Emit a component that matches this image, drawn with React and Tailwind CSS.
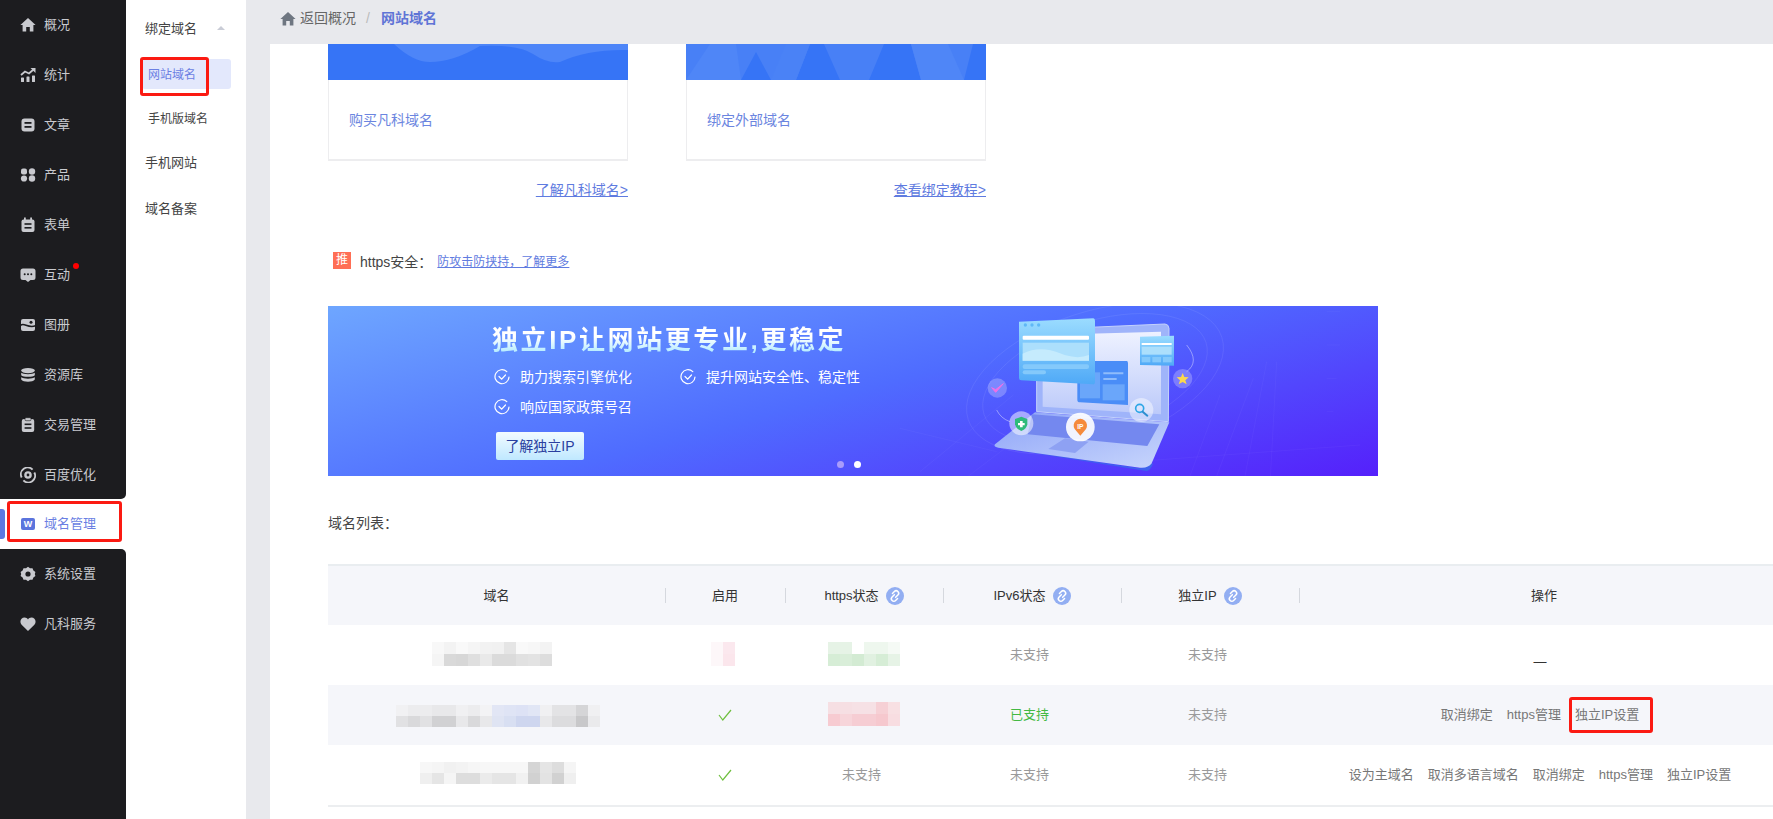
import React from 'react';

const ic = '#c8c9ce';
const I = ({ children, size = 16 }) => (
  <svg width={size} height={size} viewBox="0 0 16 16" className="shrink-0">{children}</svg>
);
const icons = {
  home: <I><path d="M8 1 15.6 8H13.4V14.6H9.8V10H6.2V14.6H2.6V8H.4Z" fill={ic} /></I>,
  stats: <I><rect x="1" y="10.5" width="3" height="4.5" rx=".6" fill={ic} /><rect x="6.5" y="9.5" width="3" height="5.5" rx=".6" fill={ic} /><rect x="12" y="8.5" width="3" height="6.5" rx=".6" fill={ic} /><path d="M1 8 5 4.5 9 6.5 13.5 2.5" fill="none" stroke={ic} strokeWidth="1.8" /><path d="M10.5 1H15.5V6Z" fill={ic} /></I>,
  doc: <I><rect x="1.5" y="1.5" width="13" height="13" rx="3" fill={ic} /><rect x="4.5" y="5" width="7" height="1.8" fill="#1c1c1f" /><rect x="4.5" y="9" width="7" height="1.8" fill="#1c1c1f" /></I>,
  grid: <I><rect x="1" y="1.5" width="6" height="6" rx="2" fill={ic} /><circle cx="12" cy="4.5" r="3.2" fill={ic} /><circle cx="4" cy="11.5" r="3.1" fill={ic} /><circle cx="12" cy="11.5" r="3.2" fill={ic} /></I>,
  form: <I><rect x="1.5" y="2.5" width="13" height="12.5" rx="2" fill={ic} /><rect x="4" y=".5" width="1.8" height="3.5" fill={ic} /><rect x="10.2" y=".5" width="1.8" height="3.5" fill={ic} /><rect x="4.5" y="6.2" width="7" height="1.6" fill="#1c1c1f" /><rect x="4.5" y="10" width="7" height="1.6" fill="#1c1c1f" /></I>,
  chat: <I><path d="M3 1.5H13A2.5 2.5 0 0 1 15.5 4V10.5A2.5 2.5 0 0 1 13 13H10.5L8 15 5.5 13H3A2.5 2.5 0 0 1 .5 10.5V4A2.5 2.5 0 0 1 3 1.5Z" fill={ic} /><circle cx="4.7" cy="7.2" r="1" fill="#1c1c1f" /><circle cx="8" cy="7.2" r="1" fill="#1c1c1f" /><circle cx="11.3" cy="7.2" r="1" fill="#1c1c1f" /></I>,
  album: <I><rect x="1" y="2" width="14" height="12" rx="2" fill={ic} /><path d="M.5 8.5C4 5 7.5 11.5 15.5 8.8" fill="none" stroke="#1c1c1f" strokeWidth="1.5" /><circle cx="11" cy="5.2" r="1.5" fill="#1c1c1f" /></I>,
  db: <I><ellipse cx="8" cy="3.6" rx="6.8" ry="2.6" fill={ic} /><path d="M1.2 5.7C3 7.6 13 7.6 14.8 5.7V8.2C13 10.2 3 10.2 1.2 8.2Z" fill={ic} /><path d="M1.2 10.3C3 12.2 13 12.2 14.8 10.3V12.4C13 15.4 3 15.4 1.2 12.4Z" fill={ic} /></I>,
  clip: <I><rect x="1.8" y="2" width="12.4" height="13" rx="2" fill={ic} /><rect x="5" y=".7" width="6" height="3" rx="1" fill={ic} stroke="#1c1c1f" strokeWidth=".6" /><rect x="4.6" y="6.5" width="6.8" height="1.6" fill="#1c1c1f" /><rect x="4.6" y="10.2" width="6.8" height="1.6" fill="#1c1c1f" /></I>,
  ring: <I><path d="M1.7 10.5A6.8 6.8 0 0 1 12.6 2.6" fill="none" stroke={ic} strokeWidth="1.9" /><path d="M14.3 5.5A6.8 6.8 0 0 1 3.4 13.4" fill="none" stroke={ic} strokeWidth="1.9" /><circle cx="8" cy="8" r="2.6" fill="none" stroke={ic} strokeWidth="2.4" /></I>,
  gear: <I><path d="M8 .8 10 2.2 12.5 2.2 13.4 4.5 15.4 6 14.8 8 15.4 10 13.4 11.5 12.5 13.8 10 13.8 8 15.2 6 13.8 3.5 13.8 2.6 11.5.6 10 1.2 8 .6 6 2.6 4.5 3.5 2.2 6 2.2Z" fill={ic} /><circle cx="8" cy="8" r="2.6" fill="#1c1c1f" /></I>,
  heart: <I><path d="M8 15 1.6 8.8C-1 5.8 1 1.6 4.6 1.6 6 1.6 7.2 2.3 8 3.4 8.8 2.3 10 1.6 11.4 1.6 15 1.6 17 5.8 14.4 8.8Z" fill={ic} /></I>,
};

const NavRow = ({ icon, label, dot }) => (
  <div className="h-[50px] flex items-center pl-[20px] gap-[8px] text-[13px] text-[#c9cacf]">
    {icons[icon]}
    <span className="relative whitespace-nowrap">
      {label}
      {dot && <span className="absolute -top-[2px] -right-[9px] w-[6px] h-[6px] rounded-full bg-[#ff0000]" />}
    </span>
  </div>
);

const Sidebar = () => (
  <div className="w-[126px] shrink-0 h-full flex flex-col">
    <div className="h-[499px] bg-[#1c1c1f] rounded-br-[5px]">
      <NavRow icon="home" label="概况" />
      <NavRow icon="stats" label="统计" />
      <NavRow icon="doc" label="文章" />
      <NavRow icon="grid" label="产品" />
      <NavRow icon="form" label="表单" />
      <NavRow icon="chat" label="互动" dot />
      <NavRow icon="album" label="图册" />
      <NavRow icon="db" label="资源库" />
      <NavRow icon="clip" label="交易管理" />
      <NavRow icon="ring" label="百度优化" />
    </div>
    <div className="h-[50px] relative flex items-center pl-[21px] gap-[9px] text-[13px] text-[#6b7fe3] bg-white">
      <span className="absolute left-0 top-[10px] w-[5px] h-[30px] bg-[#5e78e0] rounded-r-[3px]" />
      <span className="absolute left-[7px] top-[2px] w-[115px] h-[41px] border-[3px] border-[#fb1a12] rounded-[3px]" />
      <span className="w-[14px] h-[12px] bg-[#5b74dd] rounded-[2px] text-white text-[9px] font-bold flex items-center justify-center leading-none">W</span>
      <span className="whitespace-nowrap">域名管理</span>
    </div>
    <div className="flex-1 bg-[#1c1c1f] rounded-tr-[5px]">
      <NavRow icon="gear" label="系统设置" />
      <NavRow icon="heart" label="凡科服务" />
    </div>
  </div>
);

const SubNav = () => (
  <div className="w-[120px] shrink-0 h-full bg-white text-[13px] text-[#444]">
    <div className="h-[59px] pl-[19px] flex items-start pt-[19px] leading-[20px]">
      <span>绑定域名</span>
      <span className="ml-[20px] mt-[7px] w-0 h-0 border-x-[4px] border-x-transparent border-b-[4px] border-b-[#c9ccd6]" />
    </div>
    <div className="relative ml-[16px] w-[89px] h-[30px] bg-[#e3e8fc] rounded-[3px] flex items-center pl-[6px] pt-[2px] text-[12px] text-[#6b7fe3]">
      网站域名
      <span className="absolute -left-[2px] -top-[2px] w-[69px] h-[39px] border-[3px] border-[#fb1a12] rounded-[3px]" />
    </div>
    <div className="mt-[20px] h-[20px] pl-[22px] flex items-center text-[12px]">手机版域名</div>
    <div className="mt-[24px] h-[20px] pl-[19px] flex items-center">手机网站</div>
    <div className="mt-[26px] h-[20px] pl-[19px] flex items-center">域名备案</div>
  </div>
);

const Card = ({ art, label }) => (
  <div className="w-[300px] h-[117px] border border-t-0 border-[#ededef] border-b-2">
    <div className="h-[36px] -mx-px overflow-hidden">{art}</div>
    <div className="h-[80px] pl-[20px] flex items-center text-[14px] text-[#6b85e0]">{label}</div>
  </div>
);

const WaveArt = () => (
  <svg width="300" height="36" viewBox="0 0 300 36" className="block">
    <rect width="300" height="36" fill="#3674f6" />
    <path d="M66 0Q85 18 102 18 125 18 152 2 190 0 205 10 220 20 232 18 260 5 300 6V0Z" fill="#4d85f8" />
  </svg>
);
const PeakArt = () => (
  <svg width="300" height="36" viewBox="0 0 300 36" className="block">
    <rect width="300" height="36" fill="#4880f6" />
    <path d="M0 36 24 0H50L55 36Z" fill="#4f86f7" />
    <path d="M55 36 70 8 85 36ZM110 36 124 0H138L154 36ZM183 36 198 0H225L235 36ZM278 36 287 0H300V36Z" fill="#3674f6" />
    <path d="M85 36 100 0H124L110 36Z" fill="#4a82f6" />
    <path d="M235 36 225 0H262L278 36Z" fill="#4f86f7" />
  </svg>
);

const CheckRound = () => (
  <svg width="16" height="16" viewBox="0 0 16 16" className="shrink-0" fill="none" stroke="#fff" strokeWidth="1.2" strokeLinecap="round">
    <path d="M12.8 2.6A7 7 0 1 0 15 8" />
    <path d="M5 7.5 7.7 10.2 11.5 6" />
  </svg>
);

const Illustration = () => (
  <svg width="500" height="190" viewBox="0 0 1500 570" className="absolute left-[572px] -top-[11px]">
    <defs>
      <linearGradient id="win" x1="0" y1="0" x2="0" y2="1"><stop offset="0" stopColor="#9bdcff" /><stop offset="1" stopColor="#4fa9f7" /></linearGradient>
      <linearGradient id="base" x1="0" y1="0" x2="1" y2="1"><stop offset="0" stopColor="#8ea4f8" /><stop offset="1" stopColor="#c8d6fc" /></linearGradient>
      <linearGradient id="scr" x1="0" y1="0" x2="0" y2="1"><stop offset="0" stopColor="#eef2ff" /><stop offset="1" stopColor="#bccafa" /></linearGradient>
    </defs>
    <g fill="none" stroke="#fff" strokeOpacity=".1" strokeWidth="2">
      <ellipse cx="585" cy="250" rx="400" ry="200" transform="rotate(-18 585 250)" />
      <ellipse cx="585" cy="250" rx="350" ry="170" transform="rotate(-18 585 250)" />
      <path d="M60 530 340 300M170 570 420 380M860 570 960 300M940 570 1060 250M1030 570 1100 200M1110 570 1130 200M0 400 290 470M700 500 1380 450M1280 50H1320M1280 150H1320M1280 250H1310M1280 350H1300" strokeOpacity=".06" />
    </g>
    <path d="M290 345A70 70 0 0 0 330 380M860 150Q900 200 860 230" fill="none" stroke="#fff" strokeOpacity=".4" strokeWidth="3" />
    <path d="M282 455 740 528Q750 528 760 505L720 520Z" fill="#3d62ee" />
    <path d="M285 448 405 352 808 382 755 505Q745 520 720 518L295 458Q280 455 285 448Z" fill="url(#base)" />
    <path d="M396 358 778 388 742 453 383 418Z" fill="#7488ef" />
    <path d="M445 462 495 430 566 440 525 474Z" fill="#8ea1f3" />
    <path d="M410 104 795 87Q806 88 807 100L805 380 410 350Z" fill="#9fb4fa" stroke="#c4d2fc" strokeWidth="3" />
    <path d="M428 120 783 110 783 358 428 335Z" fill="url(#scr)" />
    <path d="M532 198 680 198Q684 198 684 205V330L540 322Q532 322 532 314Z" fill="#4a8df7" />
    <path d="M610 235H670M610 252H650" stroke="#8fbcfb" strokeWidth="6" />
    <rect x="608" y="268" width="66" height="48" fill="#6aa6fa" />
    <rect x="540" y="232" width="60" height="78" fill="#6aa6fa" />
    <path d="M357 80 580 70Q585 70 585 78V262Q585 269 578 268L364 256Q357 256 357 249Z" fill="url(#win)" />
    <circle cx="376" cy="90" r="5" fill="#5fb8f6" /><circle cx="396" cy="90" r="5" fill="#5fb8f6" /><circle cx="416" cy="90" r="5" fill="#5fb8f6" />
    <rect x="368" y="122" width="199" height="12" rx="3" fill="#fff" />
    <rect x="368" y="143" width="199" height="54" fill="#acdffc" />
    <path d="M368 176Q420 150 480 175 530 195 567 180V197H368Z" fill="#c5ebfd" />
    <rect x="368" y="208" width="199" height="14" rx="6" fill="#84c9fb" />
    <rect x="368" y="226" width="70" height="12" rx="6" fill="#84c9fb" />
    <path d="M720 125 822 122V212L720 210Z" fill="url(#win)" />
    <rect x="725" y="144" width="90" height="6" fill="#fff" />
    <rect x="725" y="155" width="90" height="24" fill="#acdffc" />
    <rect x="725" y="186" width="26" height="16" fill="#84c9fb" /><rect x="757" y="186" width="26" height="16" fill="#84c9fb" /><rect x="789" y="186" width="26" height="16" fill="#84c9fb" />
    <circle cx="292" cy="279" r="29" fill="#fff" fillOpacity=".25" />
    <path d="M275 278 287 292 310 266 287 284Z" fill="#f070e8" stroke="#f070e8" strokeWidth="3" strokeLinejoin="round" />
    <circle cx="364" cy="385" r="36" fill="#fff" fillOpacity=".5" />
    <path d="M345 372 364 365 382 372V388Q380 402 364 408 348 402 345 388Z" fill="#2fbb7c" />
    <path d="M360 378H368V384H374V391H368V397H360V391H354V384H360Z" fill="#fff" />
    <circle cx="541" cy="396" r="43" fill="#fff" fillOpacity=".9" />
    <path d="M541 422 524 402A20 20 0 1 1 558 402Z" fill="#f58a3c" />
    <text x="541" y="401" textAnchor="middle" fontSize="20" fontWeight="700" fill="#fff" fontFamily="Liberation Sans">IP</text>
    <circle cx="724" cy="345" r="36" fill="#fff" fillOpacity=".45" />
    <circle cx="719" cy="340" r="12" fill="none" stroke="#2ea6e6" strokeWidth="5" />
    <path d="M728 350 742 362" stroke="#2e8fd0" strokeWidth="6" strokeLinecap="round" />
    <circle cx="848" cy="251" r="29" fill="#fff" fillOpacity=".25" />
    <path d="M848 234 853 246 866 247 856 256 860 268 848 261 836 268 840 256 830 247 843 246Z" fill="#fbd84e" />
  </svg>
);

const LinkIcon = () => (
  <svg width="18" height="18" viewBox="0 0 18 18" className="shrink-0">
    <circle cx="9" cy="9" r="9" fill="#92aef2" />
    <g transform="rotate(-45 9 9)" fill="none" stroke="#fff" strokeWidth="1.5" strokeLinecap="round">
      <path d="M9.5 7.6H6.3a2.5 2.5 0 0 0 0 5H9" />
      <path d="M8.5 10.4H11.7a2.5 2.5 0 0 0 0-5H9" />
    </g>
  </svg>
);

const Head = ({ children, sep = true, className = '' }) => (
  <div className={`relative flex items-center justify-center gap-[7px] ${className}`}>
    {children}
    {sep && <span className="absolute -right-px top-[22px] w-px h-[15px] bg-[#d5d8de]" />}
  </div>
);

const Mosaic = ({ rows, w = 12, h = 12 }) => (
  <div className="flex flex-col">
    {rows.map((r, i) => (
      <div key={i} className="flex">
        {r.map((c, j) => (
          <span key={j} className="block" style={{ width: w, height: h, background: c }} />
        ))}
      </div>
    ))}
  </div>
);

const Check = () => (
  <svg width="14" height="12" viewBox="0 0 14 12" fill="none" stroke="#6fbf3f" strokeWidth="1.2"><path d="M1 6 4.8 11 13 1" /></svg>
);

const Off = () => <span className="text-[#9a9a9a] -ml-[5px]">未支持</span>;

const rowGrid = 'grid grid-cols-[337px_120px_158px_178px_178px_1fr] h-[60px] items-center text-[13px]';
const center = 'flex justify-center';

const App = () => (
  <div className="w-[1773px] h-[819px] overflow-hidden flex bg-white font-['Liberation_Sans','Noto_Sans_CJK_SC',sans-serif]">
    <Sidebar />
    <SubNav />
    <div className="flex-1 flex flex-col min-w-0 bg-[#e8e9ed]">
      <div className="h-[44px] shrink-0 flex items-center pl-[34px] pb-[7px] text-[14px]">
        <svg width="16" height="16" viewBox="0 0 16 16"><path d="M8 1 15.6 8H13.4V14.6H9.8V10H6.2V14.6H2.6V8H.4Z" fill="#6e7681" /></svg>
        <span className="ml-[4px] text-[#666]">返回概况</span>
        <span className="ml-[10px] text-[#bbb]">/</span>
        <span className="ml-[11px] font-bold text-[#5f74d6]">网站域名</span>
      </div>
      <div className="flex-1 ml-[24px] bg-white pl-[58px] min-h-0">
        <div className="flex gap-[58px]">
          <Card art={<WaveArt />} label="购买凡科域名" />
          <Card art={<PeakArt />} label="绑定外部域名" />
        </div>
        <div className="flex gap-[58px] mt-[19px] h-[20px] text-[14px] text-[#5f7be0] underline">
          <div className="w-[300px] text-right leading-[20px]">了解凡科域名&gt;</div>
          <div className="w-[300px] text-right leading-[20px]">查看绑定教程&gt;</div>
        </div>
        <div className="mt-[52px] h-[20px] flex items-center pl-[5px]">
          <span className="w-[18px] h-[17px] -mt-[4px] bg-[#ff6f55] text-white text-[12px] flex items-center justify-center leading-none">推</span>
          <span className="ml-[9px] text-[14px] text-[#444]">https安全：</span>
          <span className="ml-[5px] text-[12px] text-[#5f7be0] underline">防攻击防挟持，了解更多</span>
        </div>
        <div className="relative mt-[34px] w-[1050px] h-[170px] overflow-hidden bg-linear-[165deg] from-[#6ea6ff] via-[#4f6cff] to-[#5520fb] pl-[164px] pt-[18px]">
          <Illustration />
          <div className="h-[32px] leading-[32px] text-[26px] font-bold tracking-[2.6px] whitespace-nowrap bg-gradient-to-b from-white from-40% to-[#9fe6ff] bg-clip-text text-transparent">独立IP让网站更专业,更稳定</div>
          <div className="ml-[2px] mt-[11px] grid grid-cols-[186px_auto] w-[400px] text-[14px] text-white">
            <div className="h-[20px] flex items-center gap-[10px]"><CheckRound />助力搜索引擎优化</div>
            <div className="h-[20px] flex items-center gap-[10px]"><CheckRound />提升网站安全性、稳定性</div>
            <div className="mt-[10px] h-[20px] flex items-center gap-[10px]"><CheckRound />响应国家政策号召</div>
          </div>
          <div className="relative ml-[4px] mt-[15px] w-[88px] h-[28px] rounded-[2px] bg-gradient-to-b from-[#f2fbff] to-[#bfe8ff] text-[14px] text-[#2a3fa0] flex items-center justify-center">了解独立IP</div>
          <span className="absolute left-[509px] top-[155px] w-[7px] h-[7px] rounded-full bg-[#a99cfb]" />
          <span className="absolute left-[526px] top-[155px] w-[7px] h-[7px] rounded-full bg-white" />
        </div>
        <div className="mt-[37px] h-[20px] leading-[20px] text-[14px] text-[#444]">域名列表：</div>
        <div className="mt-[31px]">
          <div className="grid grid-cols-[337px_120px_158px_178px_178px_1fr] h-[61px] border-t-2 border-[#e9edf0] bg-[#f5f6fa] text-[13px] text-[#333]">
            <Head>域名</Head>
            <Head>启用</Head>
            <Head>https状态<LinkIcon /></Head>
            <Head>IPv6状态<LinkIcon /></Head>
            <Head>独立IP<LinkIcon /></Head>
            <Head sep={false} className="pl-[16px]">操作</Head>
          </div>
          <div className={rowGrid}>
            <div className={`${center} pb-[2px] -ml-[9px]`}>
              <Mosaic rows={[
                ['#f8f8f8', '#f3f3f3', '#f9f9f9', '#f5f5f5', '#f2f2f2', '#f1f1f1', '#e5e5e5', '#f9f9f9', '#f7f7f7', '#f3f3f3'],
                ['#f5f5f5', '#d9d9d9', '#d7d7d7', '#dfdfdf', '#e9e9e9', '#dbdbdb', '#dbdbdb', '#e1e1e1', '#e3e3e3', '#dddddd'],
              ]} />
            </div>
            <div className={`${center} pb-[2px] -ml-[5px]`}>
              <Mosaic rows={[['#fdf7f9', '#fbe8ee'], ['#fdf7f9', '#fbe6ec']]} />
            </div>
            <div className={`${center} pb-[2px]`}>
              <Mosaic rows={[
                ['#e6f3e6', '#e6f3e6', '#ffffff', '#eef7ee', '#eef7ee', '#f5faf5'],
                ['#d6edd6', '#d9eed9', '#d3ebd3', '#e1f1e1', '#d6edd6', '#e6f3e6'],
              ]} />
            </div>
            <div className={center}><Off /></div>
            <div className={center}><Off /></div>
            <div className="flex justify-center pl-[8px] text-[#333] pt-[14px]">—</div>
          </div>
          <div className={`${rowGrid} bg-[#f5f6fa]`}>
            <div className={`${center} pt-[2px] ml-[2px]`}>
              <Mosaic rows={[
                ['#f1f1f3', '#ececee', '#ececee', '#e8e8ea', '#e8e8ea', '#f0f0f2', '#ececee', '#f3f3f5', '#e2e6f5', '#dfe4f5', '#dde2f5', '#e1e6f5', '#f0f0f2', '#e3e3e5', '#e3e3e5', '#d5d5d7', '#f0f0f2'],
                ['#e1e1e3', '#d9d9db', '#e1e1e3', '#d1d1d3', '#d1d1d3', '#e8e8ea', '#d9d9db', '#e8e8ea', '#dfe4f3', '#d8dff2', '#ced6ef', '#ced6ef', '#e8e8ea', '#dcdcde', '#dcdcde', '#c8c8ca', '#eaeaec'],
              ]} w={12} h={11} />
            </div>
            <div className={center}><Check /></div>
            <div className={`${center} pb-[2px]`}>
              <Mosaic rows={[
                ['#f6dfe3', '#f6dfe3', '#f6e1e5', '#f6e1e5', '#f6d0d5', '#f8e0e3'],
                ['#f7cbd1', '#f7d5da', '#f6cdd3', '#f6cdd3', '#f6c8ce', '#f8dde1'],
              ]} />
            </div>
            <div className={center}><span className="text-[#43b943] -ml-[5px]">已支持</span></div>
            <div className={center}><Off /></div>
            <div className="flex justify-center pl-[8px] gap-[14px] text-[#777]">
              <span>取消绑定</span>
              <span>https管理</span>
              <span className="relative whitespace-nowrap">
                独立IP设置
                <span className="absolute -left-[6px] -right-[14px] -top-[8px] h-[36px] border-[3px] border-[#fb1a12] rounded-[3px]" />
              </span>
            </div>
          </div>
          <div className={`${rowGrid} h-[62px] border-b-2 border-[#eceef0]`}>
            <div className={`${center} pb-[4px] ml-[3px]`}>
              <Mosaic rows={[
                ['#f7f7f7', '#f5f5f5', '#f1f1f1', '#f3f3f3', '#f6f6f6', '#f7f7f7', '#f7f7f7', '#f7f7f7', '#f7f7f7', '#d5d5d5', '#e5e5e5', '#dddddd', '#f5f5f5'],
                ['#efefef', '#e5e5e5', '#f5f5f5', '#dddddd', '#dddddd', '#ebebeb', '#e5e5e5', '#e5e5e5', '#f1f1f1', '#d1d1d1', '#e3e3e3', '#d1d1d1', '#efefef'],
              ]} w={12} h={11} />
            </div>
            <div className={center}><Check /></div>
            <div className={center}><Off /></div>
            <div className={center}><Off /></div>
            <div className={center}><Off /></div>
            <div className="flex justify-center pl-[8px] gap-[14px] text-[#777] whitespace-nowrap">
              <span>设为主域名</span>
              <span>取消多语言域名</span>
              <span>取消绑定</span>
              <span>https管理</span>
              <span>独立IP设置</span>
            </div>
          </div>
        </div>
      </div>
    </div>
  </div>
);

export default App;
